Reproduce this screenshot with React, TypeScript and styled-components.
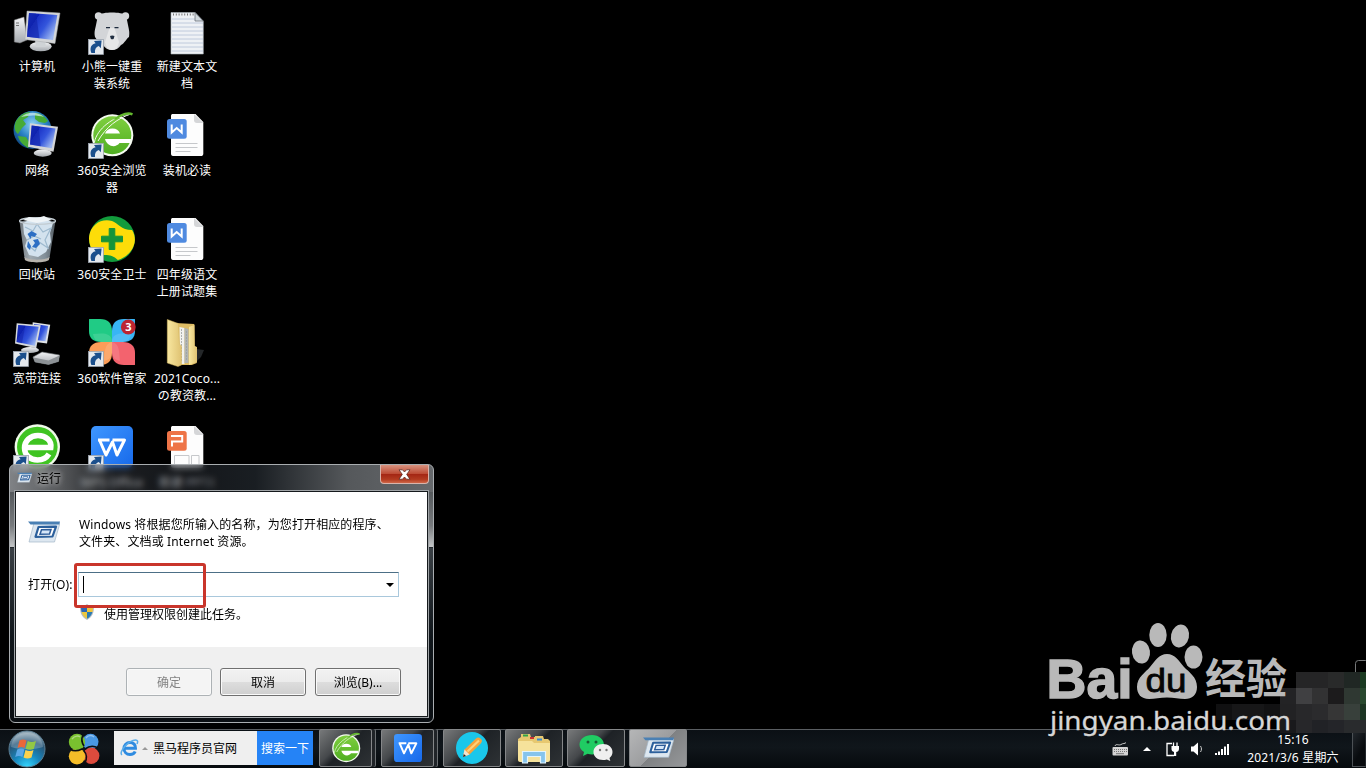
import * as React from 'react'
import styled, { createGlobalStyle, css } from 'styled-components'

const FONT = `'Noto Sans', 'Open Sans', 'Noto Sans CJK SC', sans-serif`

const GlobalStyle = createGlobalStyle`
	* {
		box-sizing: border-box;
	}
	body {
		margin: 0;
		background: #000;
		overflow: hidden;
	}
`

const Screen = styled.div`
	position: relative;
	width: 1366px;
	height: 768px;
	display: flex;
	flex-direction: column;
	background: #000;
	font: 12px/17px ${FONT};
	overflow: hidden;
	cursor: default;
`

/* ---------- desktop ---------- */

const Desktop = styled.div`
	flex: 1;
	min-height: 0;
	padding-top: 7px;
	display: grid;
	grid-template-columns: repeat(3, 74px);
	grid-auto-rows: 104px;
	column-gap: 1px;
	overflow: hidden;
`

const Shortcut = styled.div`
	display: flex;
	flex-direction: column;
	align-items: center;
	gap: 3px;

	svg {
		display: block;
		flex: none;
	}
`

const Label = styled.span`
	color: #fff;
	text-align: center;
	white-space: pre;
	letter-spacing: 0.1px;
`

const Arrow = () => (
	<g>
		<rect x="0.4" y="32.4" width="15" height="15" fill="#e4e9ee" stroke="#9aa3ad" strokeWidth="0.8" />
		<path d="M3.400 46c-2-5-.2-9 4.200-9.800l-1.600-2.200 7.600-.4-.8 7.700-2-2.300c-3 1.200-4.200 3.200-3.800 7z" fill="#1b4f8c" />
	</g>
)

const Defs = () => (
	<svg width="0" height="0" style={{ position: 'absolute' }}>
		<defs>
			<linearGradient id="screen" x1="0" y1="0" x2="1" y2="0.6">
				<stop offset="0" stopColor="#1c3cc8" />
				<stop offset="0.32" stopColor="#0a1fb8" />
				<stop offset="0.33" stopColor="#1c34c8" />
				<stop offset="0.65" stopColor="#3355dc" />
				<stop offset="1" stopColor="#9cb6f0" />
			</linearGradient>
			<linearGradient id="metal" x1="0" y1="0" x2="0" y2="1">
				<stop offset="0" stopColor="#f4f5f7" />
				<stop offset="1" stopColor="#a4a9ae" />
			</linearGradient>
			<radialGradient id="globe" cx="0.5" cy="0.35" r="0.7">
				<stop offset="0" stopColor="#8fd4f4" />
				<stop offset="0.5" stopColor="#2b83c6" />
				<stop offset="1" stopColor="#08386f" />
			</radialGradient>
			<linearGradient id="leaf" x1="0" y1="0" x2="0" y2="1">
				<stop offset="0" stopColor="#7fcf3f" />
				<stop offset="1" stopColor="#4fae22" />
			</linearGradient>
			<linearGradient id="folder" x1="0" y1="0" x2="1" y2="0">
				<stop offset="0" stopColor="#f8e7a0" />
				<stop offset="1" stopColor="#dfc272" />
			</linearGradient>
			<linearGradient id="wps" x1="0" y1="0" x2="1" y2="1">
				<stop offset="0" stopColor="#3f97ff" />
				<stop offset="1" stopColor="#1769ea" />
			</linearGradient>
			<linearGradient id="bin" x1="0" y1="0" x2="1" y2="0">
				<stop offset="0" stopColor="#8e979f" />
				<stop offset="0.3" stopColor="#c8d4dc" />
				<stop offset="0.7" stopColor="#a4b4c0" />
				<stop offset="1" stopColor="#6b757d" />
			</linearGradient>
			<radialGradient id="orb" cx="0.5" cy="1" r="0.95">
				<stop offset="0" stopColor="#35d8ff" />
				<stop offset="0.4" stopColor="#1786bd" />
				<stop offset="0.75" stopColor="#285779" />
				<stop offset="1" stopColor="#94aab8" />
			</radialGradient>
		</defs>
	</svg>
)

const Computer = () => (
	<>
		<path d="M1.300 13 11 10l3 23-7 3-5.700-1z" fill="url(#metal)" stroke="#777" strokeWidth="0.5" />
		<path d="M3 16h3M3 18.500h3" stroke="#555" strokeWidth="0.8" />
		<ellipse cx="27.700" cy="39.500" rx="11" ry="4.800" fill="url(#metal)" />
		<path d="m22 33 10 1 1 6h-10z" fill="#cfd3d6" />
		<path d="m14 4 33 2-5 30.500-30-4z" fill="#d4d6d8" stroke="#a7abaf" strokeWidth="0.5" />
		<path d="m16 6 28.300 2-4.300 25-26-3.200z" fill="url(#screen)" />
		<path d="m16 6 7 .5 3.500 24.700L14 29.800z" fill="#1224a8" opacity="0.6" />
	</>
)

const Network = () => (
	<>
		<circle cx="19.500" cy="19" r="19" fill="url(#globe)" />
		<path d="M3 10c4-6 9-9 14-9l-2 5-5 3 3 4-4 4-4 6c-4-3-4-8-2-13zM22 2c6 0 10 4 13 8l-3 2-6-1-4-3zM5 25l8 1 5 8-3 3c-5-3-9-7-10-12z" fill="#47ab35" />
		<path d="M8 6c6-5 16-6 23 0-7-2-15-2-23 0z" fill="#d7f2f7" opacity="0.7" />
		<ellipse cx="29.700" cy="42" rx="9" ry="3.700" fill="url(#metal)" />
		<path d="m17 12.300 28 3.400-4.500 25-25.500-5z" fill="#d4d6d8" />
		<path d="m18.700 14.600 23.800 3-3.700 19.700-21.800-3.900z" fill="url(#screen)" />
		<path d="m18.700 14.600 7 1 2 19.700-10.700-1.900z" fill="#1224a8" opacity="0.6" />
	</>
)

const RecycleBin = () => (
	<>
		<path d="M6.500 6h36l-6 37c-3 4-21 4-25 0z" fill="url(#bin)" opacity="0.8" />
		<path d="m10 8 8-4 6 3 8-4 8 5-3 10 1 9-5 10-8 5-9-2-4-9 2-6-3-6z" fill="#d3e2ee" />
		<path d="m12 12 8 4 4-7 6 8 8-4-6 12 3 8-9-6-4 9-7-6M14 25l7-4 7 3" fill="none" stroke="#9db9ce" strokeWidth="1.200" />
		<path d="m14.500 19 4-3 5.500 3-2.500 3-3-1-1 3zM20 25l5-1 2 5-4 4-4-1 3-4zM15 26l3 5-1 4-3-3z" fill="#2d6fc4" />
		<ellipse cx="24.500" cy="6" rx="18" ry="3.300" fill="none" stroke="#c3ccd2" strokeWidth="1.200" />
		<path d="m10 5 6-3 8 1 7-2 8 4-15 3z" fill="#eff4f7" />
		<path d="M11.500 42c4 3.500 21 3.500 25 0l-.6 3c-4 3.200-20 3.200-24 0z" fill="#b7b3ad" />
	</>
)

const Broadband = () => (
	<>
		<path d="m19.700 3.300 17.500 2.500-3.200 18.700-15-2z" fill="#dfe2e6" />
		<path d="m21 5 14.200 2-2.700 15.300-12-1.500z" fill="url(#screen)" />
		<ellipse cx="17" cy="31" rx="9" ry="3" fill="url(#metal)" />
		<path d="m3.700 4.300 24 2-4.500 23L2 24.500z" fill="#d6d9dc" />
		<path d="m5.200 6 20.500 1.800-3.800 19L3.600 23z" fill="url(#screen)" />
		<path d="m5.200 6 7 .7-3.200 17.500-5.400-1.200z" fill="#1224a8" opacity="0.5" />
		<path d="m20 38 9-5 17.500 3-1 6.500-10 3-13.500-2.500z" fill="url(#metal)" stroke="#6d7276" strokeWidth="0.6" />
		<path d="m20.500 38.500 15 3 11-5-1 6-10 3-13.500-2.500z" fill="#8d9296" />
		<Arrow />
	</>
)

const Bear = () => (
	<>
		<circle cx="10.500" cy="9" r="3.700" fill="#d6d8da" />
		<circle cx="37.500" cy="9" r="3.700" fill="#d6d8da" />
		<path d="M10 8c5-3.500 23-3.500 28 0l2 10c1 5 1.800 7 1 12-3 2-4 6-8 8-2 3-5 5-9 5s-7-2-9-5c-4-2-6-5-8-8-1-5 0-7 1-12z" fill="#d3d5d8" />
		<path d="m21.500 21-4.500 14c1 5 3 8 7 8s6-3 7-8l-4.500-14z" fill="#e6e7e8" />
		<path d="M18 20.600h4M26.500 20.600h4" stroke="#1c2a3c" strokeWidth="1.200" />
		<path d="M22 29c1-.8 3.500-.8 4.500 0l-.8 2.700c-.7.8-2.200.8-2.900 0z" fill="#222f42" />
		<Arrow />
	</>
)

const BrowserMark = () => (
	<>
		<circle cx="24.300" cy="24.300" r="21" fill="#f5fbf0" />
		<circle cx="24.300" cy="24.300" r="19" fill="url(#leaf)" />
		<path d="M17 22.500a8 7.500 0 0 1 15 0z" fill="#fff" />
		<path d="M17 28h26c0 1.500-.3 2.500-.8 4H31.500c-4 5.500-12.500 3.500-14.500-4z" fill="#fff" />
		<path d="M6.500 31C9 18 25 5 43 3c-13 4-25 13-33 27" fill="none" stroke="#f3fbec" strokeWidth="1" />
		<path d="M25 8.500C32 3 39-.5 45 2.200l-1 2.300c-4-1.800-9-.5-16 4z" fill="#63b82e" />
	</>
)

const Browser = () => (
	<>
		<BrowserMark />
		<Arrow />
	</>
)

const Guard = () => (
	<>
		<circle cx="24" cy="24" r="23" fill="#129b3c" />
		<path d="M1.200 21C3 9 14 3 24 6c6 2 9 9 20 9 2 3 2.900 6 2.900 10-.5 10-8 17-17 20-4-4-8-5-13-5-6 0-9 0-12-4-2.500-4-4.500-9-3.700-15z" fill="#fddc09" />
		<path d="M21.200 13.500h5.600v7.700h7.700v5.600h-7.700v7.700h-5.600v-7.700h-7.700v-5.600h7.700z" fill="#15943a" stroke="#15943a" strokeWidth="1" strokeLinejoin="round" />
		<Arrow />
	</>
)

const SoftwareManager = () => (
	<>
		<path d="M1 1c0-1 0-1 1-1h10c8 0 12 4 12 12v11H13C5 23 1 19 1 12z" fill="#20cb85" />
		<path d="M47 1c0-1 0-1-1-1H36c-8 0-12 4-12 12v11h11c8 0 12-4 12-11z" fill="#38b5f5" />
		<path d="M1 45c0 1 0 1 1 1h10c8 0 12-4 12-12V23H13C5 23 1 27 1 34z" fill="#fb9d58" />
		<path d="M47 45c0 1 0 1-1 1H36c-8 0-12-4-12-12V23h11c8 0 12 4 12 11z" fill="#f3636e" />
		<path d="M24 23H14C8 23 6 20 5 15c9-1 19-2 19 8zM24 23h10c6 0 8-3 9-8-9-1-19-2-19 8zM24 23v9c0 6-3 9-8 10 1-9 0-17 8-19zM24 23v9c0 6 3 9 8 10-1-9 0-17-8-19z" fill="#fff" opacity="0.13" />
		<circle cx="40.300" cy="8" r="7.400" fill="#bd2631" />
		<text x="40.300" y="12" textAnchor="middle" fill="#fff" fontSize="11" fontWeight="700">3</text>
		<Arrow />
	</>
)

const Round360 = () => (
	<>
		<circle cx="24.300" cy="24" r="22.700" fill="#f0fae9" />
		<circle cx="24.300" cy="24" r="20.300" fill="#3fc422" />
		<path d="M12.500 24.500h25.300c1-7-5-12-12.800-12S11.500 18 11.500 25s5.500 12 13 12c5 0 9-2 11.500-6" fill="none" stroke="#fff" strokeWidth="5.500" />
		<Arrow />
	</>
)

const WpsMark = () => (
	<>
		<rect x="3" y="3" width="42" height="42" rx="5" fill="url(#wps)" />
		<path d="M10 17h11.500M11.500 17l6.500 15 6.500-13L29 32l7.500-15H24.500" fill="none" stroke="#fff" strokeWidth="3" strokeLinejoin="round" />
	</>
)

const Wps = () => (
	<>
		<WpsMark />
		<Arrow />
	</>
)

const Notepad = () => (
	<>
		<path d="M8 5.500h24l8.300 9V47H8z" fill="#eef1f5" stroke="#aab1b8" strokeWidth="0.6" />
		{[12, 16, 20, 24, 28, 32, 36, 40, 44].map(y => (
			<path key={y} d={`M9 ${y}h${y < 15 ? 24 : 31}`} stroke="#b3c2d6" strokeWidth="0.8" />
		))}
		<path d="M10 7.500h21" stroke="#777" strokeWidth="2" strokeDasharray="1 1.800" />
		<path d="M32 5.500v8.500h8.300z" fill="#cfd6dc" stroke="#6c747b" strokeWidth="0.8" />
	</>
)

const Paper = () => (
	<>
		<path d="M10 3h22.500L40.300 11v31.500c0 2-1 2.500-2.500 2.500H10c-1.500 0-2-1-2-2.500V5c0-1.500.7-2 2-2z" fill="#fdfdfd" />
		<path d="M31 3v6c0 2 1 3 3 3h6.300z" fill="#d5d6d8" />
	</>
)

const WordDoc = () => (
	<>
		<Paper />
		<path d="M12.500 32.500h22M12.500 36.500h22M12.500 40.500h15" stroke="#c6c8cb" strokeWidth="1" />
		<rect x="4" y="8" width="19.700" height="19.700" rx="2.500" fill="#4f8ae0" />
		<path d="M8.700 13.500v8l5-4.500 5 4.500v-8" fill="none" stroke="#fff" strokeWidth="2" />
	</>
)

const SlideDoc = () => (
	<>
		<Paper />
		<path d="M11.500 42V32.500h14.500V42M28.500 42v-9.500h7.500V42" fill="none" stroke="#c6c8cb" strokeWidth="1" />
		<rect x="4" y="8" width="19.700" height="19.700" rx="2.500" fill="#ee7447" />
		<path d="M8 13h11.200v5.500H9v5" fill="none" stroke="#fff" strokeWidth="2" />
	</>
)

const Folder = () => (
	<>
		<path d="m33 30 8 1-3 7-5 5z" fill="#33373a" opacity="0.7" />
		<path d="m12 4 19.300 1 .5 22 2 2v15l-5 2H10z" fill="#dfbd65" />
		<path d="m16.500 8 5 1v36h-5z" fill="#f2f2ee" />
		<path d="m21.500 9 4 1v34h-4z" fill="#b1b5b3" />
		<path d="M18.500 10v32M23.500 12v30" stroke="#9a9f9f" strokeWidth="0.8" strokeDasharray="2 1" />
		<path d="m26 8 5.500-2v21l2.500 1v15l-8 3z" fill="url(#folder)" />
		<path d="m4.300.500 11 4 1.200 20.500 2 2V46l-3.500 1.500L4.300 44z" fill="url(#folder)" stroke="#d4b65e" strokeWidth="0.5" />
	</>
)

const shortcuts: { icon: React.FC; label: string }[] = [
	{ icon: Computer, label: '计算机' },
	{ icon: Bear, label: '小熊一键重\n装系统' },
	{ icon: Notepad, label: '新建文本文\n档' },
	{ icon: Network, label: '网络' },
	{ icon: Browser, label: '360安全浏览\n器' },
	{ icon: WordDoc, label: '装机必读' },
	{ icon: RecycleBin, label: '回收站' },
	{ icon: Guard, label: '360安全卫士' },
	{ icon: WordDoc, label: '四年级语文\n上册试题集' },
	{ icon: Broadband, label: '宽带连接' },
	{ icon: SoftwareManager, label: '360软件管家' },
	{ icon: Folder, label: '2021Coco...\nの教资教...' },
	{ icon: Round360, label: '' },
	{ icon: Wps, label: 'WPS Office' },
	{ icon: SlideDoc, label: '新建 PPTX' },
]

/* ---------- run dialog ---------- */

const Dialog = styled.div`
	position: absolute;
	left: 9px;
	top: 464px;
	width: 425px;
	height: 259px;
	padding: 0 5px 5px;
	display: flex;
	flex-direction: column;
	border: 1px solid #a9adb0;
	border-radius: 6px;
	backdrop-filter: blur(3px);
	background:
		linear-gradient(90deg, rgba(150, 153, 157, 0.85), rgba(125, 128, 132, 0.65) 13%, rgba(60, 65, 72, 0.45) 25%, rgba(40, 45, 52, 0.5) 42%, rgba(28, 33, 38, 0.9) 58%, #55585b 80%, #66696c) 0 0 / 100% 27px no-repeat,
		linear-gradient(#55595c, #777a7d 60%, #c4c6c7 98%, #23282d 98%) 0 27px / 100% 56px no-repeat,
		linear-gradient(#3a4045, #10161b 50%, #0a0e12) 0 83px / 100% 176px no-repeat;
`

const TitleBar = styled.div`
	height: 26px;
	flex: none;
	display: flex;
	align-items: center;
	padding-left: 2px;
	gap: 5px;
	color: #000;
	text-shadow: 0 0 6px #ccc, 0 0 5px #bbb;
`

const Close = styled.div`
	align-self: flex-start;
	margin-left: auto;
	margin-right: -1px;
	width: 49px;
	height: 19px;
	display: flex;
	align-items: center;
	justify-content: center;
	border: 1px solid #d9b4ab;
	border-top: 0;
	border-radius: 0 0 4px 4px;
	background: linear-gradient(#d8927f, #bd4c35 48%, #a32513 50%, #b23b20 80%, #cf6647);
`

const Client = styled.div`
	flex: 1;
	display: flex;
	flex-direction: column;
	border: 1px solid #15191c;
	outline: 1px solid #a0a4a7;
	background: #fff;
`

const Body = styled.div`
	height: 155px;
	padding: 24px 12px 0;
	display: flex;
	flex-direction: column;
`

const Intro = styled.div`
	display: flex;
	height: 56px;
	gap: 19px;
	white-space: pre;
	letter-spacing: 0.12px;

	svg {
		margin-top: 4px;
		flex: none;
	}
`

const OpenRow = styled.div`
	display: flex;
	align-items: center;
`

const FieldLabel = styled.label`
	width: 50px;
	white-space: nowrap;
	letter-spacing: 0.15px;
`

const Combo = styled.div`
	position: relative;
	width: 321px;
	height: 25px;
	display: flex;
	align-items: center;
	justify-content: space-between;
	padding: 0 4px;
	border: 1px solid #a9c8dc;
	border-top-color: #4c6f86;
	background: #fff;
`

const Caret = styled.span`
	width: 1px;
	height: 17px;
	background: #000;
`

const DropArrow = styled.span`
	border: 4px solid transparent;
	border-top-color: #000;
	border-bottom: 0;
`

const Highlight = styled.div`
	position: absolute;
	left: -5px;
	top: -10px;
	width: 132px;
	height: 45px;
	border: 3px solid #c9352b;
	border-radius: 3px;
`

const AdminRow = styled.div`
	display: flex;
	align-items: center;
	gap: 10px;
	margin-top: 9px;
	padding-left: 52px;

	svg {
		margin-top: -5px;
	}
`

const Footer = styled.div`
	flex: 1;
	display: flex;
	justify-content: flex-end;
	gap: 8px;
	padding: 21px 26px 0 0;
	background: #f0f0f0;
`

const Button = styled.div<{ $disabled?: boolean }>`
	width: 86px;
	height: 28px;
	display: flex;
	align-items: center;
	justify-content: center;
	border: 1px solid #707070;
	border-radius: 3px;
	box-shadow: inset 0 0 0 1px #fafafa;
	background: linear-gradient(#f2f2f2, #ebebeb 50%, #dddddd 50%, #cfcfcf);
	&:last-child {
		margin-left: 1px;
	}

	${p =>
		p.$disabled &&
		css`
			color: #838383;
			border-color: #adb2b5;
			background: #f4f4f4;
		`}
`

const RunMark = ({ width }: { width: number }) => (
	<svg width={width} height={width * 0.75} viewBox="0 0 32 24">
		<path d="M6 3h26l-5.500 19H1z" fill="#dde7f0" stroke="#a5b8c8" strokeWidth="0.7" />
		<path d="M0 1.500h32l-.8 3H2.500z" fill="#4a80b4" />
		<path d="m10.500 7 17.500-.3-3.500 9.800-17 .3z" fill="#fff" stroke="#2c609c" strokeWidth="2.200" strokeLinejoin="round" />
		<path d="m13.500 9.700 9.500-.2-1.500 4.500-9.500.2z" fill="#d5e6f8" stroke="#2d5c99" strokeWidth="1.500" />
	</svg>
)

const Shield = () => (
	<svg width="14" height="16" viewBox="0 0 14 16">
		<path d="M7 0c2 1.500 4 2 7 2 0 7-1.500 11-7 14C1.500 13 0 9 0 2c3 0 5-.5 7-2z" fill="#b9bfc3" />
		<path d="M7 1.500V8H1.600C1.200 6.500 1 5 1 3c2.500 0 4.500-.5 6-1.500z" fill="#2c68b4" />
		<path d="M7 1.500V8h5.400c.4-1.500.6-3 .6-5-2.500 0-4.500-.5-6-1.500z" fill="#f0c63b" />
		<path d="M7 8v6.800C4 13 2.300 11 1.600 8z" fill="#edc73f" />
		<path d="M7 8v6.800c3-1.800 4.700-3.800 5.400-6.800z" fill="#2c7bb4" />
	</svg>
)

const RunDialog = () => (
	<Dialog>
		<TitleBar>
			<RunMark width={15} />
			<span>运行</span>
			<Close>
				<svg width="13" height="11" viewBox="0 0 13 11">
					<path d="M1 .800h3.500l2 2.200 2-2.200H12L8.700 5.400 12 10.200H8.500L6.500 8l-2 2.200H1l3.300-4.800z" fill="#fff" stroke="#5b2b25" strokeWidth="0.8" />
				</svg>
			</Close>
		</TitleBar>
		<Client>
			<Body>
				<Intro>
					<RunMark width={32} />
					<span>{'Windows 将根据您所输入的名称，为您打开相应的程序、\n文件夹、文档或 Internet 资源。'}</span>
				</Intro>
				<OpenRow>
					<FieldLabel>打开(O):</FieldLabel>
					<Combo>
						<Caret />
						<DropArrow />
						<Highlight />
					</Combo>
				</OpenRow>
				<AdminRow>
					<Shield />
					<span>使用管理权限创建此任务。</span>
				</AdminRow>
			</Body>
			<Footer>
				<Button $disabled>确定</Button>
				<Button>取消</Button>
				<Button>浏览(B)...</Button>
			</Footer>
		</Client>
	</Dialog>
)

/* ---------- taskbar ---------- */

const Taskbar = styled.div`
	flex: none;
	height: 39px;
	display: flex;
	border-top: 1px solid #5a5e62;
	background: linear-gradient(#0b1015, #10161b 45%, #060a0d);
	color: #fff;
`

const StartArea = styled.div`
	width: 114px;
	display: flex;
	align-items: center;
	gap: 22px;
	padding-left: 8px;
`

const SearchBox = styled.div`
	width: 143px;
	height: 34px;
	margin-top: 1px;
	display: flex;
	align-items: center;
	padding-left: 6px;
	gap: 3px;
	background: #efefef;
	color: #000;
	white-space: nowrap;
`

const UpArrow = styled.span<{ $color: string; $size: number }>`
	border: ${p => p.$size}px solid transparent;
	border-top: 0;
	border-bottom-color: ${p => p.$color};
`

const SearchText = styled.span`
	margin-left: 2px;
`

const SearchButton = styled.div`
	width: 56px;
	height: 34px;
	margin-top: 1px;
	display: flex;
	align-items: center;
	justify-content: center;
	background: #2583f6;
`

const Tasks = styled.div`
	display: flex;
	margin: -1px 0 0 6px;
	gap: 4px;
`

const Task = styled.div<{ $stack?: boolean; $active?: boolean }>`
	width: ${p => (p.$stack ? 53 : 58)}px;
	height: 38px;
	margin-right: ${p => (p.$stack ? 5 : 0)}px;
	display: flex;
	align-items: center;
	justify-content: center;
	border: 1px solid #858789;
	border-radius: 2px;
	background: ${p =>
		p.$active
			? 'linear-gradient(135deg, #b5b6b7, #9c9d9f 50%, #7f8183 51%, #96989a)'
			: 'linear-gradient(135deg, #77797a, #45484b 38%, #1e2226 50%, #2e3235)'};
	box-shadow: ${p => (p.$stack ? '3px 0 0 0 #202428, 4px 0 0 0 #6c7073' : 'none')};
`

const Tray = styled.div`
	margin-left: auto;
	display: flex;
	align-items: center;
`

const TrayIcons = styled.div`
	display: flex;
	align-items: center;
	gap: 11px;
	margin-right: 16px;

	span {
		margin: 0 3px;
	}
`

const Clock = styled.div`
	width: 94px;
	text-align: center;
	white-space: nowrap;
	margin-right: 12px;
	line-height: 18px;
	letter-spacing: 0.2px;
`

const ShowDesktop = styled.div`
	width: 14px;
	height: 35px;
	border: 1px solid #4c5155;
	border-right-color: #22272b;
	background: linear-gradient(120deg, #22272c, #080b0e 60%);
`

const Tabs = () => (
	<Taskbar>
		<StartArea>
			<svg width="38" height="38" viewBox="0 0 38 38">
				<circle cx="19" cy="19" r="18" fill="url(#orb)" stroke="#5b7e93" strokeWidth="1" />
				<path d="M3 17C4 7 11 3 19 3s15 4 16 14c-9 3-23 3-32 0z" fill="#fff" opacity="0.22" />
				<path d="M11.500 10.500c2.500-1.500 5-1.200 7 0l-2 7.500c-2-1.300-4.500-1.200-7 0z" fill="#e9683a" />
				<path d="M19.700 11c2.800 1.300 5.500 1.300 8.300 0l-2.200 8c-2.800 1.200-5.500 1-8.200-.3z" fill="#93c845" />
				<path d="M9.200 19.500c2.700-1.300 5-1.200 7.200 0l-2 7.500c-2.200-1.200-4.500-1.200-7.200 0z" fill="#5ba7e6" />
				<path d="M17.500 20c2.700 1.200 5.500 1.300 8 0l-2 7.500c-2.700 1.400-5.500 1.200-8 0z" fill="#fbd24c" />
			</svg>
			<svg width="32" height="32" viewBox="0 0 32 32">
				<circle cx="22.500" cy="8.800" r="8" fill="#4a98e3" />
				<circle cx="23.200" cy="22.800" r="8.200" fill="#dd4b3d" />
				<circle cx="9" cy="23.200" r="8.200" fill="#f5bd28" />
				<circle cx="9" cy="9" r="8.200" fill="#79c02f" />
				<path d="M15 2c-2 4-1 8 1 11M30 15c-5-3-9-2-13 1M17 30c2-4 2-9-1-12M2 16c4 3 8 2 12 0" fill="none" stroke="#0c1013" strokeWidth="1.600" />
				<path d="M4 6c3-4 7-3 8-2M18 5c2-3 6-3 8-1" fill="none" stroke="#fff" strokeWidth="1.500" opacity="0.4" />
			</svg>
		</StartArea>
		<SearchBox>
			<svg width="19" height="18" viewBox="0 0 19 18">
				<path d="M4 9.300h11.500c.2-3.500-2-5.700-5.500-5.700S4 6.200 4 9.500s2.400 6 6 6c2.500 0 4.300-1 5.200-3" fill="none" stroke="#2e8be0" strokeWidth="3" />
				<path d="M2 16C-2 13 9 1 15.500 1c2.500 0 2.500 2 1.500 4" fill="none" stroke="#58acea" strokeWidth="1.500" />
			</svg>
			<UpArrow $color="#999" $size={3} />
			<SearchText>黑马程序员官网</SearchText>
		</SearchBox>
		<SearchButton>搜索一下</SearchButton>
		<Tasks>
			<Task $stack>
				<svg width="32" height="32" viewBox="0 0 48 48">
					<BrowserMark />
				</svg>
			</Task>
			<Task $stack>
				<svg width="32" height="32" viewBox="0 0 48 48">
					<WpsMark />
				</svg>
			</Task>
			<Task>
				<svg width="32" height="32" viewBox="0 0 32 32">
					<circle cx="16" cy="16" r="16" fill="#1ac7ea" />
					<path d="M8.500 17.500 20 6.500c1.500-1.500 3.300-1.200 4.800.2s1.500 3 .1 4.500L13.500 22.500 7 25z" fill="#f5a33c" />
					<path d="M11.500 19.500 23 8.500" stroke="#ffd27a" strokeWidth="2.200" />
					<path d="m8.500 17.500 5 5L7 25z" fill="#f5e3cd" />
					<path d="m7 25 .8-3 2.200 2z" fill="#222" />
				</svg>
			</Task>
			<Task>
				<svg width="34" height="32" viewBox="0 0 34 32">
					<path d="M1 7 4 5V2h9l1 3h4V4h8l1 3h4l2 2v18H1z" fill="#e7c870" />
					<path d="M1 9h14l2 2h16v17c0 1-1 2-2 2H3c-1 0-2-1-2-2z" fill="#f6e29b" />
					<path d="M6 3.500h5" stroke="#30a548" strokeWidth="2" />
					<path d="M13 6h4" stroke="#c33" strokeWidth="2" />
					<path d="M20 7.500h5" stroke="#3a8bd1" strokeWidth="2" />
					<path d="M5.500 31V19.500h23V31h-5v-6.500h-13V31z" fill="#86c4ec" stroke="#e3f5fd" strokeWidth="1.200" />
				</svg>
			</Task>
			<Task>
				<svg width="34" height="30" viewBox="0 0 34 30">
					<path d="M13 2c7 0 12 4.500 12 10s-5 9.500-12 9.500c-1.500 0-3-.3-4.500-.7L4 23l1-4c-3-2-4.500-4.500-4.500-7.500C.500 6 6 2 13 2z" fill="#20cc63" />
					<circle cx="9" cy="9" r="1.500" fill="#155d34" />
					<circle cx="17" cy="9" r="1.500" fill="#155d34" />
					<path d="M24 11c5.500 0 9.500 3.500 9.500 8 0 2.500-1.200 4.500-3 6l.8 3-3.500-1.600c-1.200.4-2.500.6-3.800.6-5.500 0-9.500-3.500-9.500-8s4-8 9.500-8z" fill="#efefef" />
					<circle cx="21" cy="17" r="1.200" fill="#777" />
					<circle cx="27.500" cy="17" r="1.200" fill="#777" />
				</svg>
			</Task>
			<Task $active>
				<RunMark width={31} />
			</Task>
		</Tasks>
		<Tray>
			<TrayIcons>
				<svg width="17" height="14" viewBox="0 0 17 14">
					<path d="M3 4C4 1 7 4 9 2.500S13 2 14 .500" fill="none" stroke="#ccc" />
					<rect x="0.500" y="5" width="15.500" height="8.500" rx="1" fill="#d4d4d4" />
					<path d="M2 7.500h13M2 9.500h13" stroke="#777" strokeDasharray="1 1" />
					<path d="M4 11.700h8" stroke="#777" />
				</svg>
				<UpArrow $color="#fff" $size={4} />
				<svg width="15" height="15" viewBox="0 0 15 15">
					<path d="M7 1.500H2v12h7" fill="none" stroke="#fff" strokeWidth="1.300" />
					<path d="M8.500.500v4M12 .500v4" stroke="#fff" strokeWidth="1.300" />
					<path d="M6.500 4h7.500v3c0 2-1.500 3-2.800 3v4H9v-4C7.500 9.500 6.500 8.500 6.500 7z" fill="#fff" />
				</svg>
				<svg width="13" height="14" viewBox="0 0 13 14">
					<path d="M0 4.500h2.500L7 .500v13l-4.500-4H0z" fill="#fff" />
					<path d="M9.500 4c1.300 2 1.300 4 0 6" fill="none" stroke="#ccc" />
				</svg>
				<svg width="15" height="12" viewBox="0 0 15 12">
					<path d="M0 10h2v2H0zM3 8.500h2V12H3zM6 6h2v6H6zM9 3.500h2V12H9zM12 1h2v11h-2z" fill="#fff" />
				</svg>
			</TrayIcons>
			<Clock>
				15:16
				<br />
				2021/3/6 星期六
			</Clock>
			<ShowDesktop />
		</Tray>
	</Taskbar>
)

/* ---------- overlay ---------- */

const Overlay = styled.svg`
	position: absolute;
	left: 1046px;
	top: 614px;
`

// 16px tiles: x, y, width, colour
const tiles: [number, number, number, string][] = [
	[1296, 672, 32, '#252526'],
	[1328, 672, 16, '#292a2a'],
	[1344, 672, 16, '#202724'],
	[1360, 672, 6, '#1b3b22'],
	[1280, 688, 16, '#232325'],
	[1296, 688, 16, '#404042'],
	[1312, 688, 16, '#323233'],
	[1328, 688, 16, '#1c1b1c'],
	[1344, 688, 16, '#2f3832'],
	[1360, 688, 6, '#29492f'],
	[1216, 704, 16, '#101011'],
	[1232, 704, 32, '#171718'],
	[1264, 704, 16, '#121213'],
	[1280, 704, 16, '#222224'],
	[1296, 704, 16, '#28282a'],
	[1312, 704, 16, '#2b2b2d'],
	[1328, 704, 16, '#363636'],
	[1344, 704, 16, '#38403b'],
	[1360, 704, 6, '#1c3523'],
	[1280, 720, 16, '#19191c'],
	[1296, 720, 16, '#27272a'],
	[1312, 720, 16, '#212226'],
	[1328, 720, 16, '#242529'],
	[1344, 720, 22, '#292b2d'],
]

const Watermark = () => (
	<Overlay width="320" height="130" viewBox="1046 614 320 130">
		<rect x="1355.500" y="660.500" width="13" height="30" rx="3" fill="#000" stroke="#77797a" />
		{tiles.map(([x, y, w, fill]) => (
			<rect key={`${x}-${y}`} x={x} y={y} width={w} height={y === 720 ? 13 : 16} fill={fill} />
		))}
		<g fill="#b9b9b9">
			<text x="1046.500" y="697.500" fontFamily="'Liberation Sans', sans-serif" fontWeight="700" fontSize="55" textLength="86" lengthAdjust="spacingAndGlyphs" stroke="#b9b9b9" strokeWidth="1.500">
				Bai
			</text>
			<ellipse cx="1141" cy="652" rx="9" ry="11.500" transform="rotate(-8 1141 652)" />
			<ellipse cx="1158" cy="635" rx="8.700" ry="12" />
			<ellipse cx="1180" cy="636" rx="9" ry="11.500" transform="rotate(12 1180 636)" />
			<ellipse cx="1193.500" cy="657" rx="9" ry="11.500" />
			<path d="M1167 654c8 0 12 7 17 13 5 5 13 10 13 20 0 8-5 12-12 12-6 0-11-1.500-18-1.500s-12 1.500-18 1.500c-8 0-12-5-12-12 0-10 9-15 13-20 5-6 9-13 17-13z" />
			<text x="1205" y="694" fontFamily="'Noto Sans CJK SC', sans-serif" fontWeight="700" fontSize="42" textLength="82" lengthAdjust="spacingAndGlyphs">
				经验
			</text>
		</g>
		<text x="1145.500" y="692" fill="#050505" stroke="#050505" strokeWidth="0.8" fontFamily="'Liberation Sans', sans-serif" fontSize="34" textLength="41" lengthAdjust="spacingAndGlyphs">
			du
		</text>
		<text x="1050" y="729.500" fill="#d6d6d6" fontFamily="'Noto Sans', sans-serif" fontSize="26" textLength="241" lengthAdjust="spacingAndGlyphs" stroke="#d6d6d6" strokeWidth="0.3">
			jingyan.baidu.com
		</text>
	</Overlay>
)

export const App: React.FC = () => (
	<Screen>
		<GlobalStyle />
		<Defs />
		<Desktop>
			{shortcuts.map(({ icon: Icon, label }) => (
				<Shortcut key={label}>
					<svg width="48" height="48" viewBox="0 0 48 48">
						<Icon />
					</svg>
					<Label>{label}</Label>
				</Shortcut>
			))}
		</Desktop>
		<Tabs />
		<RunDialog />
		<Watermark />
	</Screen>
)

export default App
